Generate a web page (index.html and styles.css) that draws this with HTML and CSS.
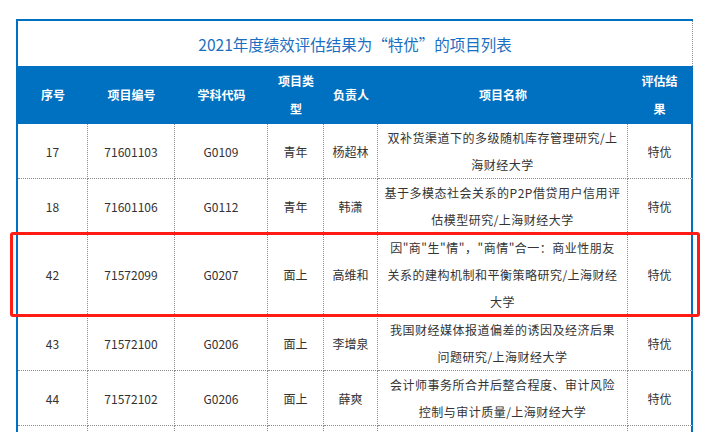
FILE: index.html
```html
<!DOCTYPE html>
<html lang="zh-CN">
<head>
<meta charset="utf-8">
<title>2021年度绩效评估结果为“特优”的项目列表</title>
<link rel="stylesheet" href="styles.css">
</head>
<body>
<div class="page">
  <table class="grid">
    <colgroup>
      <col class="c-no">
      <col class="c-id">
      <col class="c-code">
      <col class="c-type">
      <col class="c-lead">
      <col class="c-name">
      <col class="c-eval">
    </colgroup>
    <thead>
      <tr class="title-row">
        <th colspan="7" class="title">2021年度绩效评估结果为“特优”的项目列表</th>
      </tr>
      <tr class="head-row">
        <th>序号</th>
        <th>项目编号</th>
        <th>学科代码</th>
        <th>项目类型</th>
        <th>负责人</th>
        <th>项目名称</th>
        <th>评估结果</th>
      </tr>
    </thead>
    <tbody>
      <tr class="r2">
        <td>17</td><td>71601103</td><td>G0109</td><td>青年</td><td>杨超林</td>
        <td class="name">双补货渠道下的多级随机库存管理研究/上海财经大学</td><td>特优</td>
      </tr>
      <tr class="r2">
        <td>18</td><td>71601106</td><td>G0112</td><td>青年</td><td>韩潇</td>
        <td class="name">基于多模态社会关系的P2P借贷用户信用评估模型研究/上海财经大学</td><td>特优</td>
      </tr>
      <tr class="r3">
        <td>42</td><td>71572099</td><td>G0207</td><td>面上</td><td>高维和</td>
        <td class="name">因"商"生"情"，"商情"合一：商业性朋友关系的建构机制和平衡策略研究/上海财经大学</td><td>特优</td>
      </tr>
      <tr class="r2">
        <td>43</td><td>71572100</td><td>G0206</td><td>面上</td><td>李增泉</td>
        <td class="name">我国财经媒体报道偏差的诱因及经济后果问题研究/上海财经大学</td><td>特优</td>
      </tr>
      <tr class="r2">
        <td>44</td><td>71572102</td><td>G0206</td><td>面上</td><td>薛爽</td>
        <td class="name">会计师事务所合并后整合程度、审计风险控制与审计质量/上海财经大学</td><td>特优</td>
      </tr>
      <tr class="r2">
        <td></td><td></td><td></td><td></td><td></td><td class="name"></td><td></td>
      </tr>
    </tbody>
  </table>
  <div class="highlight"></div>
</div>
</body>
</html>
```

FILE: styles.css
```css
* { box-sizing: border-box; }

body {
  margin: 0;
  background: #fff;
  font-family: "Noto Sans CJK SC", "Noto Sans", sans-serif;
  color: #333;
}

.page {
  position: relative;
  padding: 19px 0 0 16px;
}

.grid {
  border-collapse: separate;
  border-spacing: 0;
  table-layout: fixed;
  width: 677px;
  border-left: 2px solid #0070c0;
  border-top: 2px solid #0070c0;
}

.c-no { width: 70px; }
.c-id { width: 87px; }
.c-code { width: 93px; }
.c-type { width: 56px; }
.c-lead { width: 54px; }
.c-name { width: 250px; }
.c-eval { width: 65px; }

.title {
  height: 45px;
  padding: 0;
  font-size: 15.5px;
  font-weight: normal;
  color: #1b6fc2;
  text-align: center;
  vertical-align: middle;
  border-right: 1px dotted #8c8c8c;
}

.head-row th {
  height: 58px;
  padding: 1px 9px;
  background: #0070c0;
  color: #fff;
  font-size: 12px;
  font-weight: bold;
  line-height: 28px;
  text-align: center;
  vertical-align: middle;
}

.head-row th:last-child {
  border-right: 2px solid #0070c0;
}

tbody td {
  padding: 0 4px;
  font-size: 12px;
  line-height: 27px;
  text-align: center;
  vertical-align: middle;
  border-right: 1px dotted #8c8c8c;
  border-bottom: 1px dotted #8c8c8c;
}

tbody td:last-child {
  border-right: 2px solid #0070c0;
}

tbody td.name {
  padding: 0 6.5px;
  letter-spacing: 0.5px;
}

.r2 td { height: 55px; }
.r3 td { height: 81px; }

.highlight {
  position: absolute;
  left: 10px;
  top: 232px;
  width: 690px;
  height: 85px;
  border: 3px solid #ff1c14;
  border-radius: 3px;
}
```
